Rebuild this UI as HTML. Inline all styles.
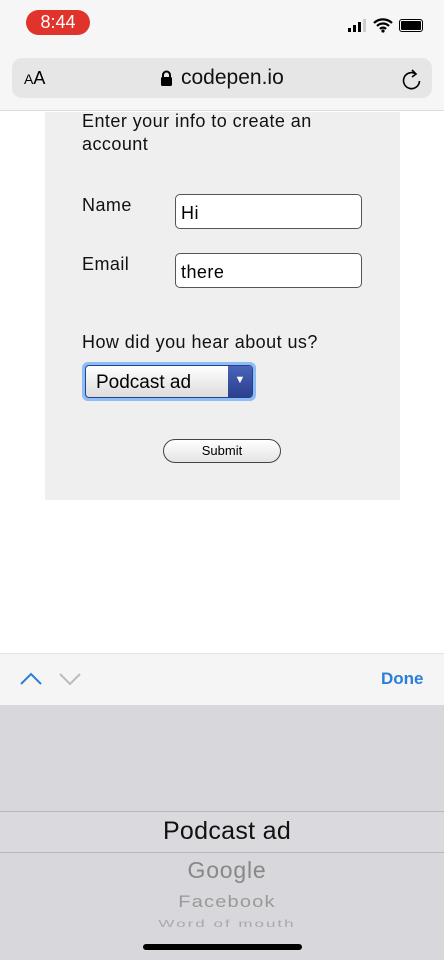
<!DOCTYPE html>
<html><head><style>
*{margin:0;padding:0;box-sizing:border-box}
body{width:444px;height:960px;overflow:hidden;background:#fff;font-family:"Liberation Sans",sans-serif;position:relative}
.a{position:absolute}
.f{letter-spacing:0.45px}
</style></head><body>
<div class="a" style="left:0;top:0;width:444px;height:111px;background:#f6f6f6;border-bottom:1px solid #ddd"></div>
<div class="a" style="left:26px;top:10px;width:64px;height:25px;border-radius:13px;background:#e0332b;color:#fff;font-size:18px;text-align:center;line-height:25px">8:44</div>
<div class="a" style="left:348px;top:28px;width:3px;height:4px;background:#000"></div>
<div class="a" style="left:353px;top:25px;width:3px;height:7px;background:#000"></div>
<div class="a" style="left:358px;top:22px;width:3px;height:10px;background:#000"></div>
<div class="a" style="left:363px;top:19px;width:3px;height:13px;background:#ccc"></div>
<svg class="a" style="left:373px;top:17px" width="20" height="16" viewBox="0 0 20 16"><path d="M1 6a13 13 0 0 1 18 0M4 9a8.5 8.5 0 0 1 12 0M7 12a4 4 0 0 1 6 0" stroke="#000" stroke-width="2.2" fill="none"/><circle cx="10" cy="14" r="1.6"/></svg>
<div class="a" style="left:399px;top:19px;width:24px;height:13px;border:1.5px solid #000;border-radius:3px;padding:1px"><div style="width:100%;height:100%;background:#000;border-radius:1px"></div></div>
<div class="a" style="left:12px;top:58px;width:420px;height:40px;border-radius:10px;background:#e6e6e6"></div>
<div class="a" style="left:24px;top:68px;font-size:18px"><span style="font-size:14px">A</span>A</div>
<svg class="a" style="left:160px;top:70px" width="13" height="16" viewBox="0 0 13 16"><path d="M3 7V5a3.5 3.5 0 0 1 7 0v2" stroke="#000" stroke-width="2" fill="none"/><rect x="1" y="7" width="11" height="9" rx="1.5"/></svg>
<div class="a" style="left:181px;top:66px;font-size:21px;color:#111">codepen.io</div>
<svg class="a" style="left:402px;top:68px" width="20" height="22" viewBox="0 0 20 22"><path d="M14 6a8 8 0 1 0 3.5 7" stroke="#000" stroke-width="1.6" fill="none"/><path d="M10 2l4 4-4 3" stroke="#000" stroke-width="1.6" fill="none"/></svg>
<div class="a" style="left:45px;top:112px;width:355px;height:388px;background:#f0eff0"></div>
<div class="a f" style="left:82px;top:110px;font-size:18px;line-height:23px;color:#111">Enter your info to create an<br>account</div>
<div class="a f" style="left:82px;top:195px;font-size:18px;color:#111">Name</div>
<div class="a f" style="left:175px;top:194px;width:187px;height:35px;border:1px solid #555;border-radius:5px;background:#fff;font-size:18px;padding:8px 5px">Hi</div>
<div class="a f" style="left:82px;top:254px;font-size:18px;color:#111">Email</div>
<div class="a f" style="left:175px;top:253px;width:187px;height:35px;border:1px solid #555;border-radius:5px;background:#fff;font-size:18px;padding:8px 5px">there</div>
<div class="a f" style="left:82px;top:332px;font-size:18px;color:#111">How did you hear about us?</div>
<div class="a" style="left:82px;top:362px;width:174px;height:39px;border-radius:6px;background:#8bbdf6"></div>
<div class="a" style="left:85px;top:365px;width:168px;height:33px;border:1px solid #2f3e8a;border-radius:4px;background:linear-gradient(#fff,#dcdcdc);font-size:19px;padding:6px 10px;color:#000">Podcast ad</div>
<div class="a" style="left:228px;top:366px;width:24px;height:31px;background:linear-gradient(#4a64b8,#2b3f8e);border-radius:0 3px 3px 0;color:#fff;font-size:11px;text-align:center;line-height:28px">▼</div>
<div class="a" style="left:163px;top:439px;width:118px;height:24px;border:1px solid #444;border-radius:12px;background:linear-gradient(#fff,#e4e4e4);font-size:13px;text-align:center;line-height:22px">Submit</div>
<div class="a" style="left:0;top:653px;width:444px;height:52px;background:#f5f5f6;border-top:1px solid #e4e4e4"></div>
<svg class="a" style="left:19px;top:670px" width="64" height="18" viewBox="0 0 64 18"><path d="M2 14l10-10 10 10" stroke="#2a7fd8" stroke-width="2" fill="none"/><path d="M41 4l10 10 10-10" stroke="#bbb" stroke-width="2" fill="none"/></svg>
<div class="a" style="left:381px;top:669px;font-size:17px;font-weight:bold;color:#2a7fd8">Done</div>
<div class="a" style="left:0;top:705px;width:444px;height:255px;background:#d7d7dc"></div>
<div class="a" style="left:0;top:811px;width:444px;height:42px;border-top:1px solid #b8b8bc;border-bottom:1px solid #b8b8bc;background:#dadade"></div>
<div class="a" style="left:0;top:817px;width:454px;text-align:center;font-size:25px;color:#111;letter-spacing:0.3px">Podcast ad</div>
<div class="a" style="left:0;top:857px;width:454px;text-align:center;font-size:23px;color:#888;letter-spacing:0.8px">Google</div>
<div class="a" style="left:0;top:891px;width:454px;text-align:center;font-size:20px;color:#999;transform:scaleY(.85);letter-spacing:1.2px">Facebook</div>
<div class="a" style="left:0;top:914px;width:454px;text-align:center;font-size:17px;color:#aaa;transform:scaleY(.6);letter-spacing:2px">Word of mouth</div>
<div class="a" style="left:143px;top:944px;width:159px;height:6px;border-radius:3px;background:#000"></div>
</body></html>
